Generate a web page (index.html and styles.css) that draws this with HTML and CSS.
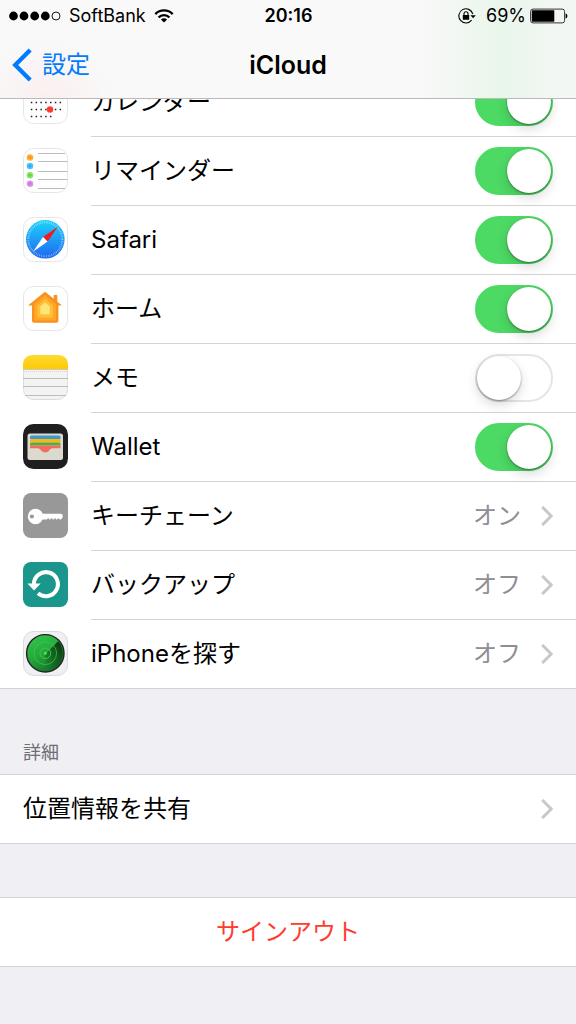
FILE: index.html
```html
<!DOCTYPE html>
<html lang="ja">
<head>
    <meta charset="UTF-8" />
    <meta name="viewport" content="width=device-width, initial-scale=1.0" />
    <title>iCloud</title>
    <link rel="stylesheet" href="styles.css">
</head>
<body>
    <!-- ヘッダー -->
    <header class="header">
        <div class="status">
            <div class="status-left">
                <svg class="signal" width="52" height="10" viewBox="0 0 52 10" aria-hidden="true">
                    <circle cx="4.5" cy="5" r="4.4" />
                    <circle cx="15" cy="5" r="4.4" />
                    <circle cx="25.7" cy="5" r="4.4" />
                    <circle cx="36.3" cy="5" r="4.4" />
                    <circle cx="47" cy="5" r="4" fill="none" stroke="#000" stroke-width="0.9" />
                </svg>
                <span>SoftBank</span>
                <svg class="wifi" width="20" height="14" viewBox="0 0 20 14" aria-hidden="true">
                    <g fill="none" stroke="#000" stroke-width="2.3">
                        <path d="M1.3 5.1a12.2 12.2 0 0 1 17.4 0" />
                        <path d="M4.6 8.4a7.6 7.6 0 0 1 10.8 0" />
                    </g>
                    <path d="M10 13.6 6.9 10.6a4.4 4.4 0 0 1 6.2 0Z" />
                </svg>
            </div>
            <time class="clock">20:16</time>
            <div class="status-right">
                <svg class="lock" width="18" height="16" viewBox="0 0 18 16" aria-hidden="true">
                    <path d="M14.8 6A7.1 7.1 0 1 0 13.6 12.2" fill="none" stroke="#000" stroke-width="1.1" />
                    <path d="M12.4 7.2h5.4L15.1 10.2Z" />
                    <rect x="4.8" y="7" width="6.4" height="4.8" rx="0.6" />
                    <path d="M6 7.2V5.8a2 2 0 0 1 4 0v1.4" fill="none" stroke="#000" stroke-width="1.1" />
                </svg>
                <span>69%</span>
                <svg class="battery" width="38" height="16" viewBox="0 0 38 16" aria-hidden="true">
                    <rect x="0.6" y="1.1" width="34" height="13.8" rx="2.4" fill="none" stroke="#333" stroke-width="1" />
                    <rect x="1.8" y="2.3" width="22.5" height="11.4" rx="0.8" />
                    <path d="M35.6 5.5c2.4.6 2.4 4.4 0 5Z" />
                </svg>
            </div>
        </div>
        <nav class="nav">
            <a href="#" class="back">
                <svg width="20" height="34" viewBox="0 0 20 34" aria-hidden="true">
                    <path d="M18.2 2 3.2 17l15 15" fill="none" stroke="#007aff" stroke-width="4.3" />
                </svg>
                設定
            </a>
            <h1 class="title">iCloud</h1>
        </nav>
    </header>

    <main class="content">
        <!-- iCloudの項目 -->
        <ul class="group">
            <li class="row">
                <svg class="icon" viewBox="0 0 45 45" aria-hidden="true">
                    <rect x="0.5" y="0.5" width="44" height="44" rx="10" fill="#fff" stroke="#e6e6e6" />
                    <g fill="none" stroke="#222" stroke-width="1.5" stroke-dasharray="1.5 3.3">
                        <path d="M7.8 16.5h31" />
                        <path d="M7.8 23.5h31" />
                        <path d="M7.8 30.5h31" />
                        <path d="M7.8 37.5h21" />
                    </g>
                    <circle cx="27" cy="30.5" r="3.2" fill="#ff3b30" />
                </svg>
                <div class="row-body">
                    <label for="calendar">カレンダー</label>
                    <input type="checkbox" class="switch" id="calendar" name="calendar" checked />
                </div>
            </li>
            <li class="row">
                <svg class="icon" viewBox="0 0 45 45" aria-hidden="true">
                    <rect x="0.5" y="0.5" width="44" height="44" rx="10" fill="#fff" stroke="#e6e6e6" />
                    <path d="M15 5.5h27M15 13.5h29.5M15 23.5h29.5M15 31.5h29.5M15 40.5h27" stroke="#bcbcbc" />
                    <g fill-opacity="0.75">
                        <circle cx="7" cy="9.5" r="3.3" fill="#ff9500" />
                        <circle cx="7" cy="18" r="3.3" fill="#1badf8" />
                        <circle cx="7" cy="27.2" r="3.3" fill="#63da38" />
                        <circle cx="7" cy="35.7" r="3.3" fill="#cc73e1" />
                    </g>
                    <circle cx="7" cy="9.5" r="1.6" fill="#ff9500" />
                    <circle cx="7" cy="18" r="1.6" fill="#1badf8" />
                    <circle cx="7" cy="27.2" r="1.6" fill="#63da38" />
                    <circle cx="7" cy="35.7" r="1.6" fill="#cc73e1" />
                </svg>
                <div class="row-body">
                    <label for="reminder">リマインダー</label>
                    <input type="checkbox" class="switch" id="reminder" name="reminder" checked />
                </div>
            </li>
            <li class="row">
                <svg class="icon" viewBox="0 0 45 45" aria-hidden="true">
                    <defs>
                        <linearGradient id="safari-bg" x1="0" y1="0" x2="0" y2="1">
                            <stop offset="0" stop-color="#1fd3fb" />
                            <stop offset="1" stop-color="#1e67f0" />
                        </linearGradient>
                    </defs>
                    <rect x="0.5" y="0.5" width="44" height="44" rx="10" fill="#fff" stroke="#e6e6e6" />
                    <circle cx="22.3" cy="22.3" r="19.3" fill="url(#safari-bg)" />
                    <circle cx="22.3" cy="22.3" r="17" fill="none" stroke="#fff" stroke-opacity="0.6" stroke-width="2" stroke-dasharray="0.6 1.18" />
                    <path d="M34.8 9.8 20 20l4.6 4.6Z" fill="#f4191c" />
                    <path d="M10 34.8 20 20l4.6 4.6Z" fill="#fff" />
                </svg>
                <div class="row-body">
                    <label for="safari">Safari</label>
                    <input type="checkbox" class="switch" id="safari" name="safari" checked />
                </div>
            </li>
            <li class="row">
                <svg class="icon" viewBox="0 0 45 45" aria-hidden="true">
                    <rect x="0.5" y="0.5" width="44" height="44" rx="10" fill="#fff" stroke="#e6e6e6" />
                    <path d="M22 5.7 30.7 12.7V9h3.6v6.7L39 19.5h-3.6V34.7q0 2-2 2H11q-2 0-2-2V19.5H5Z" fill="#f8921e" />
                    <path d="M22 9.3 33 18.3V33.5q0 1-1 1H12.3q-1 0-1-1V18.3Z" fill="#ffa628" />
                    <path d="M22 13 30 19.7V31.5H14.2V19.7Z" fill="#ffbf3b" />
                    <path d="M22 16.5 26.8 20.5V28.2H17.3V20.5Z" fill="#ffe47a" />
                </svg>
                <div class="row-body">
                    <label for="home">ホーム</label>
                    <input type="checkbox" class="switch" id="home" name="home" checked />
                </div>
            </li>
            <li class="row">
                <svg class="icon" viewBox="0 0 45 45" aria-hidden="true">
                    <defs>
                        <linearGradient id="memo-top" x1="0" y1="0" x2="0" y2="1">
                            <stop offset="0" stop-color="#ffdb31" />
                            <stop offset="1" stop-color="#fdc904" />
                        </linearGradient>
                    </defs>
                    <rect x="0.5" y="0.5" width="44" height="44" rx="10" fill="#f3f3f3" stroke="#dcdcdc" />
                    <path d="M0 14V10.5Q0 0 10.5 0H34.5Q45 0 45 10.5V14Z" fill="url(#memo-top)" />
                    <path d="M0 14.5h45" stroke="#cfc9b4" />
                    <path d="M1 16.5h43" stroke="#d4d4d4" stroke-dasharray="1 1" />
                    <path d="M0 23.5h45M0 31.5h45M2 40.5h41" stroke="#bdbdbd" />
                </svg>
                <div class="row-body">
                    <label for="memo">メモ</label>
                    <input type="checkbox" class="switch" id="memo" name="memo" />
                </div>
            </li>
            <li class="row">
                <svg class="icon" viewBox="0 0 45 45" aria-hidden="true">
                    <rect width="45" height="45" rx="10.5" fill="#1f1f1f" />
                    <rect x="4.5" y="9.5" width="35.5" height="26.5" rx="2.5" fill="#dcd9ce" />
                    <path d="M7 15v-2q0-1.5 1.5-1.5H36q1.5 0 1.5 1.5v2Z" fill="#3a9bd3" />
                    <path d="M7 18.5v-2q0-1.5 1.5-1.5H36q1.5 0 1.5 1.5v2Z" fill="#fdb50f" />
                    <path d="M7 21.5V20q0-1.5 1.5-1.5H36q1.5 0 1.5 1.5v1.5Z" fill="#51b03c" />
                    <path d="M7 24.2V21.5H37.5V24.2H30c-2.5 0-2.7 1-4 2.5-1.8 2.3-5.8 2.3-7.6 0-1.3-1.5-1.5-2.5-4-2.5Z" fill="#f26d5f" />
                </svg>
                <div class="row-body">
                    <label for="wallet">Wallet</label>
                    <input type="checkbox" class="switch" id="wallet" name="wallet" checked />
                </div>
            </li>
            <li>
                <a href="#" class="row">
                    <svg class="icon" viewBox="0 0 45 45" aria-hidden="true">
                        <rect width="45" height="45" rx="8" fill="#989898" />
                        <path d="M18 20.7H37.7q2 0 2 2v1.5l-1.7 2.3h-1.3l-1.3-1.5-1.3 1.5h-.8l-1.3-1.5-1.3 1.5h-.8l-1.3-1.5-1.3 1.5h-.8l-1.3-1.5-1.3 1.5H18Z" fill="#fff" />
                        <circle cx="12.5" cy="23.5" r="7.7" fill="#fff" />
                        <circle cx="8.9" cy="23.5" r="2.1" fill="#989898" />
                    </svg>
                    <span class="row-body">
                        <span>キーチェーン</span>
                        <span class="value">オン</span>
                        <svg class="arrow" width="12" height="20" viewBox="0 0 12 20" aria-hidden="true"><path d="M1.2 1 10.2 10l-9 9" /></svg>
                    </span>
                </a>
            </li>
            <li>
                <a href="#" class="row">
                    <svg class="icon" viewBox="0 0 45 45" aria-hidden="true">
                        <rect width="45" height="45" rx="8" fill="#1a968d" />
                        <path d="M10.9 22A12 12 0 1 1 15 31.2" fill="none" stroke="#fff" stroke-width="4" />
                        <path d="M4.5 21.5h13.2L11 28.5Z" fill="#fff" />
                    </svg>
                    <span class="row-body">
                        <span>バックアップ</span>
                        <span class="value">オフ</span>
                        <svg class="arrow" width="12" height="20" viewBox="0 0 12 20" aria-hidden="true"><path d="M1.2 1 10.2 10l-9 9" /></svg>
                    </span>
                </a>
            </li>
            <li>
                <a href="#" class="row">
                    <svg class="icon" viewBox="0 0 45 45" aria-hidden="true">
                        <defs>
                            <linearGradient id="radar" x1="0.2" y1="0" x2="0.7" y2="1">
                                <stop offset="0" stop-color="#35c34d" />
                                <stop offset="0.5" stop-color="#24a83a" />
                                <stop offset="1" stop-color="#14702a" />
                            </linearGradient>
                            <linearGradient id="radar-shade" x1="0.8" y1="0" x2="0.2" y2="1">
                                <stop offset="0" stop-color="#07330e" />
                                <stop offset="1" stop-color="#07330e" stop-opacity="0" />
                            </linearGradient>
                        </defs>
                        <rect x="0.5" y="0.5" width="44" height="44" rx="10" fill="#efeff4" stroke="#d9d9de" />
                        <circle cx="22.3" cy="22.3" r="18.7" fill="url(#radar)" stroke="#222" stroke-width="1.4" />
                        <path d="M22.3 22.3 34.8 9.8A17.9 17.9 0 0 1 22.3 40.2Z" fill="url(#radar-shade)" />
                        <g fill="none" stroke="#35cf46">
                            <circle cx="22.3" cy="22.3" r="5.3" />
                            <circle cx="22.3" cy="22.3" r="11.3" stroke-opacity="0.7" />
                        </g>
                        <path d="M22.3 22.3 34.6 10" stroke="#39cc53" />
                        <circle cx="22.3" cy="22.3" r="1.5" fill="#46e35e" />
                    </svg>
                    <span class="row-body">
                        <span>iPhoneを探す</span>
                        <span class="value">オフ</span>
                        <svg class="arrow" width="12" height="20" viewBox="0 0 12 20" aria-hidden="true"><path d="M1.2 1 10.2 10l-9 9" /></svg>
                    </span>
                </a>
            </li>
        </ul>

        <!-- 詳細 -->
        <h2 class="group-title">詳細</h2>
        <ul class="group group-plain">
            <li>
                <a href="#" class="row">
                    <span class="row-body">
                        <span>位置情報を共有</span>
                        <svg class="arrow" width="12" height="20" viewBox="0 0 12 20" aria-hidden="true"><path d="M1.2 1 10.2 10l-9 9" /></svg>
                    </span>
                </a>
            </li>
        </ul>

        <button type="button" class="signout">サインアウト</button>
    </main>
</body>
</html>
```

FILE: styles.css
```css
* {
    box-sizing:border-box;
}
body {
    margin:0;
    background:#efeff4;
    color:#000;
    font-family:Inter, "Noto Sans CJK JP", sans-serif;
    font-size:24px;
    line-height:36px;
}
a {
    color:inherit;
    text-decoration:none;
}

/* ヘッダー */
.header {
    position:fixed;
    top:0;
    left:0;
    right:0;
    z-index:1;
    height:99px;
    border-bottom:1px solid #b9b9bb;
    background:
        radial-gradient(circle at 8% 110%, #fbeeee 0, rgba(251,238,238,0) 70px),
        linear-gradient(90deg, #f9f9f9 72%, #e9f6eb 87%, #f3f7f3 97%);
}
.status {
    display:grid;
    grid-template-columns:1fr auto 1fr;
    align-items:center;
    height:32px;
    padding:0 8px 0 9px;
    font-size:18px;
    line-height:32px;
}
.status-left,
.status-right {
    display:flex;
    align-items:center;
    gap:8px;
}
.status-right {
    justify-content:flex-end;
    gap:4px;
}
.lock {
    margin-right:6px;
}
.clock {
    font-weight:600;
}
.nav {
    display:grid;
    grid-template-columns:1fr auto 1fr;
    align-items:center;
    height:66px;
    padding:0 12px;
}
.back {
    display:flex;
    align-items:center;
    gap:10px;
    color:#007aff;
}
.title {
    margin:0;
    font-size:25px;
    font-weight:600;
}

/* リスト */
.content {
    padding-top:68px;
}
.group {
    margin:0;
    padding:0;
    border-bottom:1px solid #d3d3d7;
    background:#fff;
    list-style:none;
}
.group-plain {
    border-top:1px solid #d3d3d7;
}
.row {
    display:flex;
    align-items:flex-start;
    padding-left:23px;
}
.icon {
    flex:none;
    width:45px;
    height:45px;
    margin:11px 23px 0 0;
}
.row-body {
    display:flex;
    flex:1;
    align-items:center;
    height:69px;
    padding-right:23px;
    border-bottom:1px solid #d3d3d7;
}
.group li:last-child .row-body {
    height:68px;
    border-bottom:none;
}
.row-body > :first-child {
    flex:1;
}
.value {
    margin-right:20px;
    color:#8e8e93;
}
.arrow {
    fill:none;
    stroke:#c7c7cc;
    stroke-width:3;
}
.group-title {
    margin:0;
    padding:50px 23px 8px;
    color:#6d6d72;
    font-size:18px;
    font-weight:400;
    line-height:27px;
}

/* スイッチ */
.switch {
    appearance:none;
    display:flex;
    width:78px;
    height:48px;
    margin:0;
    padding:0;
    border:2px solid #e5e5e5;
    border-radius:24px;
    background:#fff;
}
.switch::before {
    content:'';
    width:44px;
    height:44px;
    border-radius:50%;
    background:#fff;
    box-shadow:0 1px 2px rgba(0,0,0,0.4), 0 5px 12px rgba(0,0,0,0.15);
}
.switch:checked {
    justify-content:flex-end;
    border-color:#4cd964;
    background:#4cd964;
}

.signout {
    display:block;
    width:100%;
    height:70px;
    margin-top:53px;
    padding:0;
    border:solid #d3d3d7;
    border-width:1px 0;
    background:#fff;
    color:#ff3b30;
    font:inherit;
}
```
